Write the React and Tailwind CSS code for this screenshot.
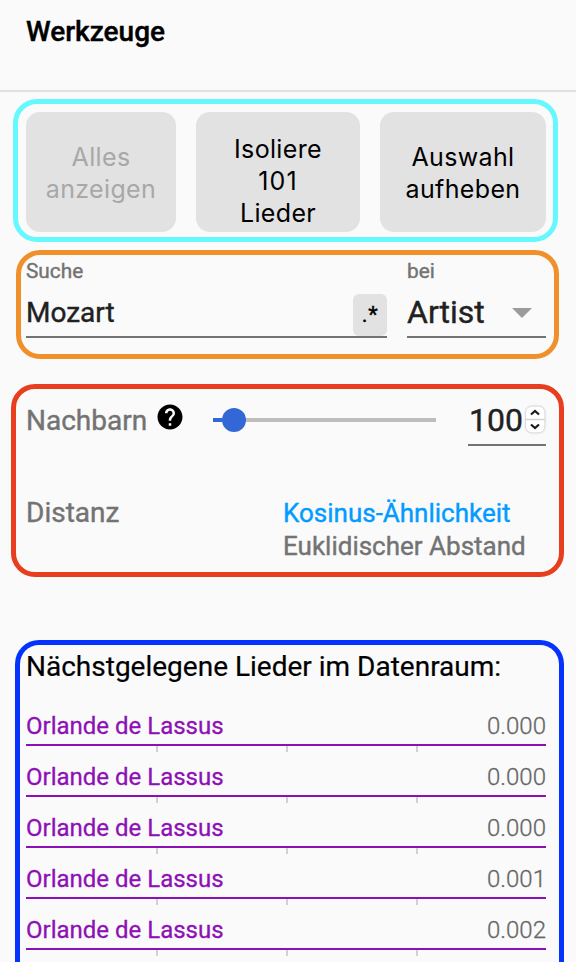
const songs = [
  { name: "Orlande de Lassus", distance: "0.000" },
  { name: "Orlande de Lassus", distance: "0.000" },
  { name: "Orlande de Lassus", distance: "0.000" },
  { name: "Orlande de Lassus", distance: "0.001" },
  { name: "Orlande de Lassus", distance: "0.002" },
];

function Header() {
  return (
    <header className="h-[92px] border-b-2 border-[#e0e0e0] pl-[26px] pt-4">
      <h1 className="text-[28px] leading-8 font-medium [-webkit-text-stroke:0.4px]">Werkzeuge</h1>
    </header>
  );
}

function ActionButton({ className, children, disabled }) {
  return (
    <button
      disabled={disabled}
      className={`flex h-[120px] items-center justify-center rounded-[14px] bg-[#e2e2e2] text-center font-['Inter',sans-serif] text-[25px] leading-8 tracking-[0.35px] disabled:text-[#a8a8a8] ${className}`}
    >
      {children}
    </button>
  );
}

function Actions() {
  return (
    <section className="mt-[7px] ml-[13px] flex h-[143px] w-[545px] gap-5 rounded-[24px] border-5 border-[#66f8ff] pl-2 pt-2">
      <ActionButton className="w-[150px] pt-0.5" disabled>
        <span>Alles<br />anzeigen</span>
      </ActionButton>
      <ActionButton className="w-[164px] pt-[18px]">
        <span>Isoliere<br /><span className="tracking-[1.2px]">101</span><br />Lieder</span>
      </ActionButton>
      <ActionButton className="w-[166px] pt-0.5">
        <span>Auswahl<br />aufheben</span>
      </ActionButton>
    </section>
  );
}

function Search() {
  return (
    <section className="mt-2 ml-4 flex h-[109px] w-[543px] gap-5 rounded-[24px] border-5 border-[#f0902b] pl-[5px] pt-[3px] [-webkit-text-stroke:0.4px]">
      <div className="w-[361px]">
        <div className="h-[26px] text-[20.8px] leading-[26px] text-[#737373]">Suche</div>
        <div className="flex h-[54px] items-end justify-between border-b-2 border-[#737373]">
          <span className="h-[42px] pt-px text-[28px] leading-9 text-[#212121]">Mozart</span>
          <span className="h-[42px] w-[34px] rounded-[6px] bg-[#e2e2e2] text-center text-[22px] leading-[42px] tracking-[0.5px]">.*</span>
        </div>
      </div>
      <div className="w-[139px]">
        <div className="h-[26px] text-[20.8px] leading-[26px] text-[#737373]">bei</div>
        <div className="flex h-[54px] items-end justify-between border-b-2 border-[#737373] pr-[14px]">
          <span className="h-[42px] text-[32px] leading-9 text-[#212121]">Artist</span>
          <svg className="mb-[18px]" width="20" height="10" viewBox="0 0 20 10">
            <path d="M0 0h20L10 10z" fill="#9b9b9b" />
          </svg>
        </div>
      </div>
    </section>
  );
}

function HelpIcon() {
  return (
    <svg width="30" height="30" viewBox="0 0 24 24">
      <path d="M12 2C6.48 2 2 6.48 2 12s4.48 10 10 10 10-4.48 10-10S17.52 2 12 2zm1 17h-2v-2h2v2zm2.07-7.75l-.9.92C13.45 12.9 13 13.5 13 15h-2v-.5c0-1.1.45-2.1 1.17-2.83l1.24-1.26c.37-.36.59-.86.59-1.41 0-1.1-.9-2-2-2s-2 .9-2 2H8c0-2.21 1.79-4 4-4s4 1.79 4 4c0 .88-.36 1.68-.93 2.25z" />
    </svg>
  );
}

function Spinner() {
  return (
    <svg width="22" height="30" viewBox="0 0 22 30" className="drop-shadow-[0_0.5px_1px_rgba(0,0,0,0.35)]">
      <rect x="2" y="1.5" width="18.5" height="26" rx="6" fill="#fff" />
      <path d="M2 14.5h18.5" stroke="#d4d4d4" strokeWidth="1.5" />
      <path d="M7 9.5l4-3.6 4 3.6M7 19.5l4 3.6 4-3.6" fill="none" stroke="#1c1c1c" strokeWidth="2.2" />
    </svg>
  );
}

function Neighbors() {
  return (
    <section className="mt-[25px] ml-[11px] h-[193px] w-[553px] rounded-[24px] border-5 border-[#e83e1f] pl-[10px] pr-[13px] [-webkit-text-stroke:0.4px]">
      <div className="flex h-[57px]">
        <span className="w-[129px] pt-[14px] text-[28px] leading-9 text-[#737373]">Nachbarn</span>
        <div className="w-[58px] pt-[13px]"><HelpIcon /></div>
        <div className="mt-[19px] flex h-6 w-[223px] items-center">
          <div className="h-1 w-[9px] bg-[#3367d6]" />
          <div className="size-6 rounded-full bg-[#3367d6]" />
          <div className="h-1 grow bg-[#bdbdbd]" />
        </div>
        <div className="ml-8 flex w-[78px] border-b-2 border-[#737373]">
          <span className="w-14 pl-px pt-[13px] text-[32px] leading-9 text-[#212121]">100</span>
          <div className="pt-4"><Spinner /></div>
        </div>
      </div>
      <div className="flex pt-[50px]">
        <span className="w-[257px] text-[28px] leading-[33px] text-[#737373]">Distanz</span>
        <div className="pt-px text-[26px] leading-[33px] whitespace-nowrap text-[#737373]">
          <div className="text-[#039bff]">Kosinus-Ähnlichkeit</div>
          <div>Euklidischer Abstand</div>
        </div>
      </div>
    </section>
  );
}

function Ticks() {
  return (
    <div className="flex h-1.5 justify-between pr-32 pl-[130px]">
      <i className="h-1.5 w-0.5 bg-[#d1d1d1]" />
      <i className="h-1.5 w-0.5 bg-[#d1d1d1]" />
      <i className="h-1.5 w-0.5 bg-[#d1d1d1]" />
    </div>
  );
}

function NearestSongs() {
  return (
    <section className="mt-[63px] ml-[15px] h-[360px] w-[549px] rounded-t-[24px] border-5 border-b-0 border-[#0433ff] pl-[6px] pr-[13px]">
      <h2 className="h-[55px] pt-1 text-[28px] leading-9 [-webkit-text-stroke:0.2px]">Nächstgelegene Lieder im Datenraum:</h2>
      <ul>
        {songs.map((song, i) => (
          <li key={i} className="h-[51px]">
            <div className="flex h-[46px] justify-between border-b-2 border-[#8e10b5] pt-[10px] text-[24px] leading-8 [-webkit-text-stroke:0.3px]">
              <span className="text-[#8e10b5]">{song.name}</span>
              <span className="font-light text-[#666]">{song.distance}</span>
            </div>
            <Ticks />
          </li>
        ))}
      </ul>
    </section>
  );
}

export default function App() {
  return (
    <main className="h-[962px] w-[576px] overflow-hidden bg-[#fafafa] font-['Roboto',sans-serif] text-black">
      <Header />
      <Actions />
      <Search />
      <Neighbors />
      <NearestSongs />
    </main>
  );
}
